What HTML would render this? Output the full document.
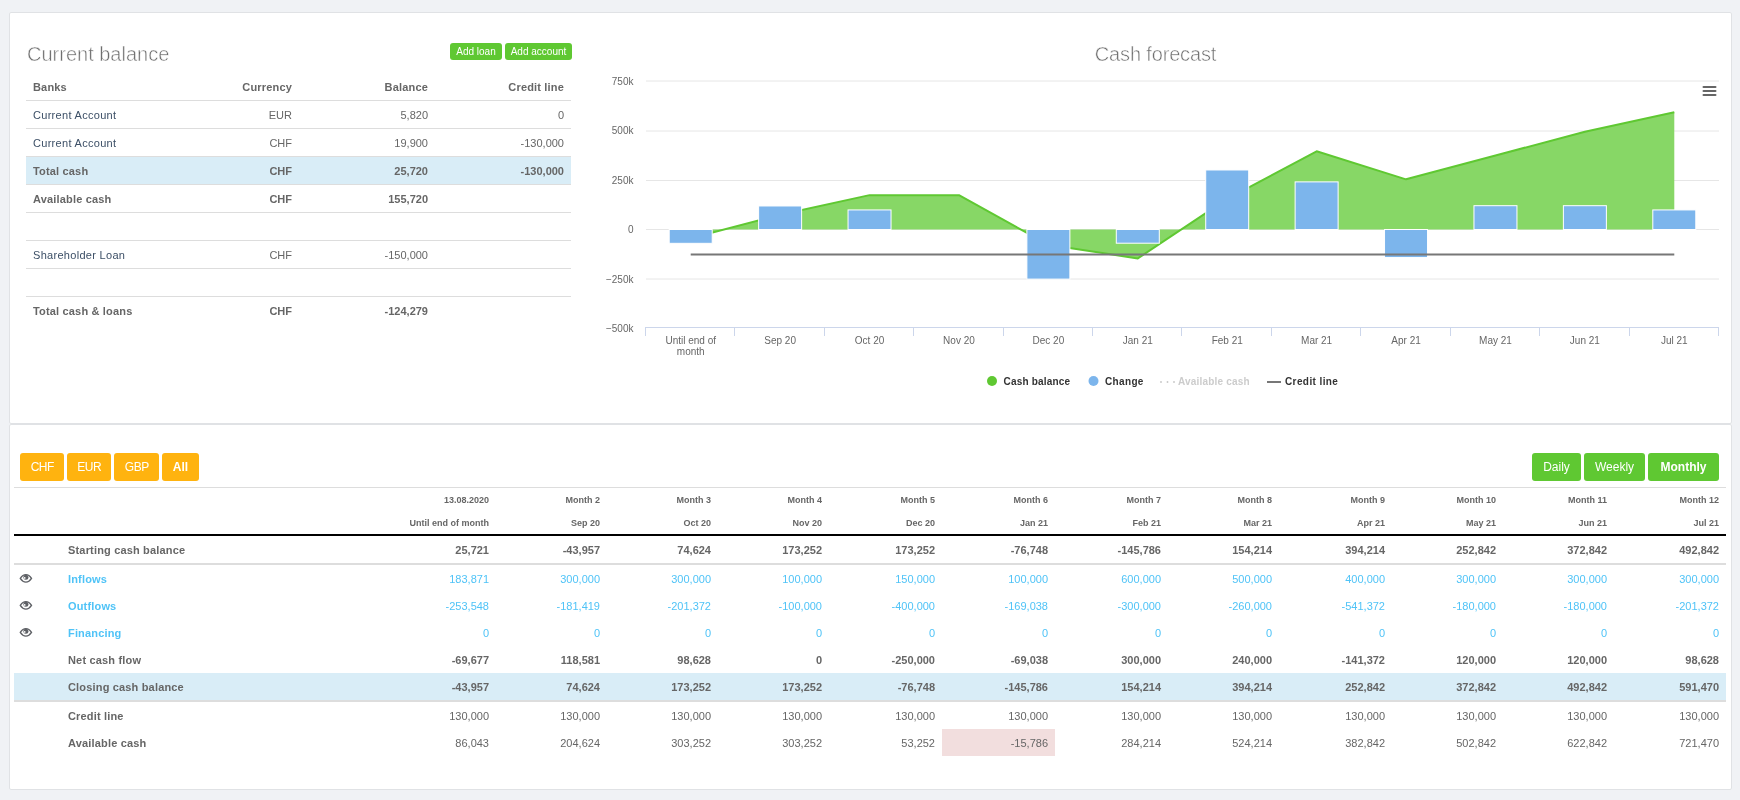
<!DOCTYPE html>
<html><head><meta charset="utf-8"><style>
html,body{margin:0;padding:0;}
body{width:1740px;height:800px;background:#f0f2f5;position:relative;overflow:hidden;font-family:"Liberation Sans",sans-serif;}
.t{position:absolute;white-space:nowrap;}
#root{position:absolute;left:0;top:0;width:1740px;height:800px;will-change:transform;}
.r{position:absolute;}
</style></head><body><div id="root">
<div class="r" style="left:9px;top:12px;width:1723px;height:412px;background:#fff;box-sizing:border-box;border:1px solid #e0e2e5;border-radius:2px;"></div>
<div class="r" style="left:9px;top:424px;width:1723px;height:366px;background:#fff;box-sizing:border-box;border:1px solid #e0e2e5;border-radius:2px;"></div>
<div class="t" style="left:27px;top:44.07px;font-size:20px;line-height:20px;color:#6f6f6f;font-weight:300;-webkit-text-stroke:0.5px #fff;">Current balance</div>
<div class="r" style="left:450px;top:43px;width:52px;height:17px;background:#5fc832;border-radius:3px;"></div>
<div class="t" style="left:176.0px;width:600px;text-align:center;top:46.54px;font-size:10px;line-height:10px;color:#fff;font-weight:normal;">Add loan</div>
<div class="r" style="left:505px;top:43px;width:67px;height:17px;background:#5fc832;border-radius:3px;"></div>
<div class="t" style="left:238.5px;width:600px;text-align:center;top:46.54px;font-size:10px;line-height:10px;color:#fff;font-weight:normal;">Add account</div>
<div class="r" style="left:26px;top:100px;width:545px;height:1px;background:#dddddd;"></div>
<div class="r" style="left:26px;top:128px;width:545px;height:1px;background:#dddddd;"></div>
<div class="r" style="left:26px;top:156px;width:545px;height:1px;background:#dddddd;"></div>
<div class="r" style="left:26px;top:184px;width:545px;height:1px;background:#dddddd;"></div>
<div class="r" style="left:26px;top:212px;width:545px;height:1px;background:#dddddd;"></div>
<div class="r" style="left:26px;top:240px;width:545px;height:1px;background:#dddddd;"></div>
<div class="r" style="left:26px;top:268px;width:545px;height:1px;background:#dddddd;"></div>
<div class="r" style="left:26px;top:296px;width:545px;height:1px;background:#dddddd;"></div>
<div class="r" style="left:26px;top:157px;width:545px;height:27px;background:#d9edf7;"></div>
<div class="t" style="left:33px;top:81.69px;font-size:11px;line-height:11px;color:#666;font-weight:bold;letter-spacing:0.17px">Banks</div>
<div class="t" style="left:-108px;width:400px;text-align:right;top:81.69px;font-size:11px;line-height:11px;color:#666;font-weight:bold;letter-spacing:0.17px">Currency</div>
<div class="t" style="left:28px;width:400px;text-align:right;top:81.69px;font-size:11px;line-height:11px;color:#666;font-weight:bold;letter-spacing:0.17px">Balance</div>
<div class="t" style="left:164px;width:400px;text-align:right;top:81.69px;font-size:11px;line-height:11px;color:#666;font-weight:bold;letter-spacing:0.17px">Credit line</div>
<div class="t" style="left:33px;top:109.69px;font-size:11px;line-height:11px;color:#3c4f66;font-weight:normal;letter-spacing:0.3px">Current Account</div>
<div class="t" style="left:-108px;width:400px;text-align:right;top:109.69px;font-size:11px;line-height:11px;color:#666;font-weight:normal;">EUR</div>
<div class="t" style="left:28px;width:400px;text-align:right;top:109.69px;font-size:11px;line-height:11px;color:#666;font-weight:normal;">5,820</div>
<div class="t" style="left:164px;width:400px;text-align:right;top:109.69px;font-size:11px;line-height:11px;color:#666;font-weight:normal;">0</div>
<div class="t" style="left:33px;top:137.69px;font-size:11px;line-height:11px;color:#3c4f66;font-weight:normal;letter-spacing:0.3px">Current Account</div>
<div class="t" style="left:-108px;width:400px;text-align:right;top:137.69px;font-size:11px;line-height:11px;color:#666;font-weight:normal;">CHF</div>
<div class="t" style="left:28px;width:400px;text-align:right;top:137.69px;font-size:11px;line-height:11px;color:#666;font-weight:normal;">19,900</div>
<div class="t" style="left:164px;width:400px;text-align:right;top:137.69px;font-size:11px;line-height:11px;color:#666;font-weight:normal;">-130,000</div>
<div class="t" style="left:33px;top:165.69px;font-size:11px;line-height:11px;color:#666;font-weight:bold;letter-spacing:0.17px">Total cash</div>
<div class="t" style="left:-108px;width:400px;text-align:right;top:165.69px;font-size:11px;line-height:11px;color:#666;font-weight:bold;">CHF</div>
<div class="t" style="left:28px;width:400px;text-align:right;top:165.69px;font-size:11px;line-height:11px;color:#666;font-weight:bold;">25,720</div>
<div class="t" style="left:164px;width:400px;text-align:right;top:165.69px;font-size:11px;line-height:11px;color:#666;font-weight:bold;">-130,000</div>
<div class="t" style="left:33px;top:193.69px;font-size:11px;line-height:11px;color:#666;font-weight:bold;letter-spacing:0.17px">Available cash</div>
<div class="t" style="left:-108px;width:400px;text-align:right;top:193.69px;font-size:11px;line-height:11px;color:#666;font-weight:bold;">CHF</div>
<div class="t" style="left:28px;width:400px;text-align:right;top:193.69px;font-size:11px;line-height:11px;color:#666;font-weight:bold;">155,720</div>
<div class="t" style="left:33px;top:249.69px;font-size:11px;line-height:11px;color:#3c4f66;font-weight:normal;letter-spacing:0.3px">Shareholder Loan</div>
<div class="t" style="left:-108px;width:400px;text-align:right;top:249.69px;font-size:11px;line-height:11px;color:#666;font-weight:normal;">CHF</div>
<div class="t" style="left:28px;width:400px;text-align:right;top:249.69px;font-size:11px;line-height:11px;color:#666;font-weight:normal;">-150,000</div>
<div class="t" style="left:33px;top:305.69px;font-size:11px;line-height:11px;color:#666;font-weight:bold;letter-spacing:0.17px">Total cash &amp; loans</div>
<div class="t" style="left:-108px;width:400px;text-align:right;top:305.69px;font-size:11px;line-height:11px;color:#666;font-weight:bold;">CHF</div>
<div class="t" style="left:28px;width:400px;text-align:right;top:305.69px;font-size:11px;line-height:11px;color:#666;font-weight:bold;">-124,279</div>
<div class="t" style="left:855.5px;width:600px;text-align:center;top:44.07px;font-size:20px;line-height:20px;color:#6f6f6f;font-weight:300;-webkit-text-stroke:0.5px #fff;letter-spacing:-0.15px;">Cash forecast</div>
<div class="t" style="left:233.5px;width:400px;text-align:right;top:77.34px;font-size:10px;line-height:10px;color:#666;font-weight:normal;">750k</div>
<div class="t" style="left:233.5px;width:400px;text-align:right;top:125.94px;font-size:10px;line-height:10px;color:#666;font-weight:normal;">500k</div>
<div class="t" style="left:233.5px;width:400px;text-align:right;top:175.54px;font-size:10px;line-height:10px;color:#666;font-weight:normal;">250k</div>
<div class="t" style="left:233.5px;width:400px;text-align:right;top:225.14px;font-size:10px;line-height:10px;color:#666;font-weight:normal;">0</div>
<div class="t" style="left:233.5px;width:400px;text-align:right;top:274.74px;font-size:10px;line-height:10px;color:#666;font-weight:normal;">−250k</div>
<div class="t" style="left:233.5px;width:400px;text-align:right;top:324.34px;font-size:10px;line-height:10px;color:#666;font-weight:normal;">−500k</div>
<div class="t" style="left:390.70833333333337px;width:600px;text-align:center;top:335.54px;font-size:10px;line-height:10px;color:#666;font-weight:normal;">Until end of</div>
<div class="t" style="left:390.70833333333337px;width:600px;text-align:center;top:346.54px;font-size:10px;line-height:10px;color:#666;font-weight:normal;">month</div>
<div class="t" style="left:480.125px;width:600px;text-align:center;top:335.54px;font-size:10px;line-height:10px;color:#666;font-weight:normal;">Sep 20</div>
<div class="t" style="left:569.5416666666667px;width:600px;text-align:center;top:335.54px;font-size:10px;line-height:10px;color:#666;font-weight:normal;">Oct 20</div>
<div class="t" style="left:658.9583333333334px;width:600px;text-align:center;top:335.54px;font-size:10px;line-height:10px;color:#666;font-weight:normal;">Nov 20</div>
<div class="t" style="left:748.375px;width:600px;text-align:center;top:335.54px;font-size:10px;line-height:10px;color:#666;font-weight:normal;">Dec 20</div>
<div class="t" style="left:837.7916666666667px;width:600px;text-align:center;top:335.54px;font-size:10px;line-height:10px;color:#666;font-weight:normal;">Jan 21</div>
<div class="t" style="left:927.2083333333335px;width:600px;text-align:center;top:335.54px;font-size:10px;line-height:10px;color:#666;font-weight:normal;">Feb 21</div>
<div class="t" style="left:1016.625px;width:600px;text-align:center;top:335.54px;font-size:10px;line-height:10px;color:#666;font-weight:normal;">Mar 21</div>
<div class="t" style="left:1106.0416666666667px;width:600px;text-align:center;top:335.54px;font-size:10px;line-height:10px;color:#666;font-weight:normal;">Apr 21</div>
<div class="t" style="left:1195.4583333333335px;width:600px;text-align:center;top:335.54px;font-size:10px;line-height:10px;color:#666;font-weight:normal;">May 21</div>
<div class="t" style="left:1284.875px;width:600px;text-align:center;top:335.54px;font-size:10px;line-height:10px;color:#666;font-weight:normal;">Jun 21</div>
<div class="t" style="left:1374.2916666666667px;width:600px;text-align:center;top:335.54px;font-size:10px;line-height:10px;color:#666;font-weight:normal;">Jul 21</div>
<svg class="r" style="left:0;top:0" width="1740" height="800"><line x1="646" y1="81.0" x2="1719" y2="81.0" stroke="#e6e6e6" stroke-width="1"/><line x1="646" y1="131.0" x2="1719" y2="131.0" stroke="#e6e6e6" stroke-width="1"/><line x1="646" y1="180.5" x2="1719" y2="180.5" stroke="#e6e6e6" stroke-width="1"/><line x1="646" y1="229.5" x2="1719" y2="229.5" stroke="#e6e6e6" stroke-width="1"/><line x1="646" y1="279.0" x2="1719" y2="279.0" stroke="#e6e6e6" stroke-width="1"/><polygon points="690.71,229.5 690.71,238.22 780.12,214.69 869.54,195.13 958.96,195.13 1048.38,244.73 1137.79,258.42 1227.21,198.90 1316.62,151.29 1406.04,179.34 1495.46,155.53 1584.88,131.72 1674.29,112.15 1674.29,229.5" fill="#87d766"/><polyline points="690.71,238.22 780.12,214.69 869.54,195.13 958.96,195.13 1048.38,244.73 1137.79,258.42 1227.21,198.90 1316.62,151.29 1406.04,179.34 1495.46,155.53 1584.88,131.72 1674.29,112.15" fill="none" stroke="#5fc832" stroke-width="2" stroke-linejoin="round"/><rect x="669.21" y="229.50" width="43" height="13.82" fill="#7cb5ec" stroke="#fff" stroke-width="1"/><rect x="758.62" y="205.97" width="43" height="23.53" fill="#7cb5ec" stroke="#fff" stroke-width="1"/><rect x="848.04" y="209.93" width="43" height="19.57" fill="#7cb5ec" stroke="#fff" stroke-width="1"/><rect x="1026.88" y="229.50" width="43" height="49.60" fill="#7cb5ec" stroke="#fff" stroke-width="1"/><rect x="1116.29" y="229.50" width="43" height="13.70" fill="#7cb5ec" stroke="#fff" stroke-width="1"/><rect x="1205.71" y="169.98" width="43" height="59.52" fill="#7cb5ec" stroke="#fff" stroke-width="1"/><rect x="1295.12" y="181.88" width="43" height="47.62" fill="#7cb5ec" stroke="#fff" stroke-width="1"/><rect x="1384.54" y="229.50" width="43" height="28.05" fill="#7cb5ec" stroke="#fff" stroke-width="1"/><rect x="1473.96" y="205.69" width="43" height="23.81" fill="#7cb5ec" stroke="#fff" stroke-width="1"/><rect x="1563.38" y="205.69" width="43" height="23.81" fill="#7cb5ec" stroke="#fff" stroke-width="1"/><rect x="1652.79" y="209.93" width="43" height="19.57" fill="#7cb5ec" stroke="#fff" stroke-width="1"/><line x1="690.71" y1="254.6" x2="1674.29" y2="254.6" stroke="#777" stroke-width="2"/><rect x="645" y="327" width="1074" height="1" fill="#ccd6eb"/><rect x="645" y="327" width="1" height="9" fill="#ccd6eb"/><rect x="734" y="327" width="1" height="9" fill="#ccd6eb"/><rect x="824" y="327" width="1" height="9" fill="#ccd6eb"/><rect x="913" y="327" width="1" height="9" fill="#ccd6eb"/><rect x="1003" y="327" width="1" height="9" fill="#ccd6eb"/><rect x="1092" y="327" width="1" height="9" fill="#ccd6eb"/><rect x="1181" y="327" width="1" height="9" fill="#ccd6eb"/><rect x="1271" y="327" width="1" height="9" fill="#ccd6eb"/><rect x="1360" y="327" width="1" height="9" fill="#ccd6eb"/><rect x="1450" y="327" width="1" height="9" fill="#ccd6eb"/><rect x="1539" y="327" width="1" height="9" fill="#ccd6eb"/><rect x="1629" y="327" width="1" height="9" fill="#ccd6eb"/><rect x="1718" y="327" width="1" height="9" fill="#ccd6eb"/><line x1="1703.5" y1="87" x2="1715.5" y2="87" stroke="#666" stroke-width="2" stroke-linecap="round"/><line x1="1703.5" y1="91" x2="1715.5" y2="91" stroke="#666" stroke-width="2" stroke-linecap="round"/><line x1="1703.5" y1="95" x2="1715.5" y2="95" stroke="#666" stroke-width="2" stroke-linecap="round"/><circle cx="992" cy="381" r="5" fill="#5fc832"/><circle cx="1093.5" cy="381" r="5" fill="#7cb5ec"/><rect x="1160.25" y="381" width="1.5" height="2" fill="#ccc"/><rect x="1166.75" y="381" width="1.5" height="2" fill="#ccc"/><rect x="1173.25" y="381" width="1.5" height="2" fill="#ccc"/><rect x="1267" y="381" width="14" height="2" fill="#777"/></svg>
<div class="t" style="left:1003.5px;top:376.54px;font-size:10px;line-height:10px;color:#333;font-weight:bold;letter-spacing:0.2px">Cash balance</div>
<div class="t" style="left:1105px;top:376.54px;font-size:10px;line-height:10px;color:#333;font-weight:bold;letter-spacing:0.35px">Change</div>
<div class="t" style="left:1178px;top:376.54px;font-size:10px;line-height:10px;color:#ccc;font-weight:bold;letter-spacing:0.2px">Available cash</div>
<div class="t" style="left:1285px;top:376.54px;font-size:10px;line-height:10px;color:#333;font-weight:bold;letter-spacing:0.4px">Credit line</div>
<div class="r" style="left:20px;top:453px;width:44px;height:28px;background:#ffb30f;border-radius:3px;"></div>
<div class="t" style="left:-257.75px;width:600px;text-align:center;top:461.34px;font-size:12px;line-height:12px;color:#fff;font-weight:normal;letter-spacing:-0.5px">CHF</div>
<div class="r" style="left:67px;top:453px;width:44px;height:28px;background:#ffb30f;border-radius:3px;"></div>
<div class="t" style="left:-210.75px;width:600px;text-align:center;top:461.34px;font-size:12px;line-height:12px;color:#fff;font-weight:normal;letter-spacing:-0.5px">EUR</div>
<div class="r" style="left:114px;top:453px;width:45px;height:28px;background:#ffb30f;border-radius:3px;"></div>
<div class="t" style="left:-163.25px;width:600px;text-align:center;top:461.34px;font-size:12px;line-height:12px;color:#fff;font-weight:normal;letter-spacing:-0.5px">GBP</div>
<div class="r" style="left:162px;top:453px;width:37px;height:28px;background:#ffb30f;border-radius:3px;"></div>
<div class="t" style="left:-119.5px;width:600px;text-align:center;top:460.84px;font-size:12px;line-height:12px;color:#fff;font-weight:bold;">All</div>
<div class="r" style="left:1532px;top:453px;width:49px;height:28px;background:#5fc832;border-radius:3px;"></div>
<div class="t" style="left:1256.5px;width:600px;text-align:center;top:460.84px;font-size:12px;line-height:12px;color:#fff;font-weight:normal;">Daily</div>
<div class="r" style="left:1584px;top:453px;width:61px;height:28px;background:#5fc832;border-radius:3px;"></div>
<div class="t" style="left:1314.5px;width:600px;text-align:center;top:460.84px;font-size:12px;line-height:12px;color:#fff;font-weight:normal;">Weekly</div>
<div class="r" style="left:1648px;top:453px;width:71px;height:28px;background:#5fc832;border-radius:3px;"></div>
<div class="t" style="left:1383.5px;width:600px;text-align:center;top:460.84px;font-size:12px;line-height:12px;color:#fff;font-weight:bold;">Monthly</div>
<div class="r" style="left:14px;top:487px;width:1712px;height:1px;background:#dddddd;"></div>
<div class="r" style="left:14px;top:534px;width:1712px;height:2px;background:#000;"></div>
<div class="r" style="left:14px;top:563px;width:1712px;height:2px;background:#dddddd;"></div>
<div class="r" style="left:14px;top:673px;width:1712px;height:27px;background:#d9edf7;"></div>
<div class="r" style="left:14px;top:700px;width:1712px;height:2px;background:#dddddd;"></div>
<div class="r" style="left:942px;top:729px;width:113px;height:27px;background:#f2dede;"></div>
<div class="t" style="left:89px;width:400px;text-align:right;top:496.38px;font-size:9px;line-height:9px;color:#666;font-weight:bold;">13.08.2020</div>
<div class="t" style="left:89px;width:400px;text-align:right;top:519.38px;font-size:9px;line-height:9px;color:#666;font-weight:bold;">Until end of month</div>
<div class="t" style="left:200px;width:400px;text-align:right;top:496.38px;font-size:9px;line-height:9px;color:#666;font-weight:bold;">Month 2</div>
<div class="t" style="left:200px;width:400px;text-align:right;top:519.38px;font-size:9px;line-height:9px;color:#666;font-weight:bold;">Sep 20</div>
<div class="t" style="left:311px;width:400px;text-align:right;top:496.38px;font-size:9px;line-height:9px;color:#666;font-weight:bold;">Month 3</div>
<div class="t" style="left:311px;width:400px;text-align:right;top:519.38px;font-size:9px;line-height:9px;color:#666;font-weight:bold;">Oct 20</div>
<div class="t" style="left:422px;width:400px;text-align:right;top:496.38px;font-size:9px;line-height:9px;color:#666;font-weight:bold;">Month 4</div>
<div class="t" style="left:422px;width:400px;text-align:right;top:519.38px;font-size:9px;line-height:9px;color:#666;font-weight:bold;">Nov 20</div>
<div class="t" style="left:535px;width:400px;text-align:right;top:496.38px;font-size:9px;line-height:9px;color:#666;font-weight:bold;">Month 5</div>
<div class="t" style="left:535px;width:400px;text-align:right;top:519.38px;font-size:9px;line-height:9px;color:#666;font-weight:bold;">Dec 20</div>
<div class="t" style="left:648px;width:400px;text-align:right;top:496.38px;font-size:9px;line-height:9px;color:#666;font-weight:bold;">Month 6</div>
<div class="t" style="left:648px;width:400px;text-align:right;top:519.38px;font-size:9px;line-height:9px;color:#666;font-weight:bold;">Jan 21</div>
<div class="t" style="left:761px;width:400px;text-align:right;top:496.38px;font-size:9px;line-height:9px;color:#666;font-weight:bold;">Month 7</div>
<div class="t" style="left:761px;width:400px;text-align:right;top:519.38px;font-size:9px;line-height:9px;color:#666;font-weight:bold;">Feb 21</div>
<div class="t" style="left:872px;width:400px;text-align:right;top:496.38px;font-size:9px;line-height:9px;color:#666;font-weight:bold;">Month 8</div>
<div class="t" style="left:872px;width:400px;text-align:right;top:519.38px;font-size:9px;line-height:9px;color:#666;font-weight:bold;">Mar 21</div>
<div class="t" style="left:985px;width:400px;text-align:right;top:496.38px;font-size:9px;line-height:9px;color:#666;font-weight:bold;">Month 9</div>
<div class="t" style="left:985px;width:400px;text-align:right;top:519.38px;font-size:9px;line-height:9px;color:#666;font-weight:bold;">Apr 21</div>
<div class="t" style="left:1096px;width:400px;text-align:right;top:496.38px;font-size:9px;line-height:9px;color:#666;font-weight:bold;">Month 10</div>
<div class="t" style="left:1096px;width:400px;text-align:right;top:519.38px;font-size:9px;line-height:9px;color:#666;font-weight:bold;">May 21</div>
<div class="t" style="left:1207px;width:400px;text-align:right;top:496.38px;font-size:9px;line-height:9px;color:#666;font-weight:bold;">Month 11</div>
<div class="t" style="left:1207px;width:400px;text-align:right;top:519.38px;font-size:9px;line-height:9px;color:#666;font-weight:bold;">Jun 21</div>
<div class="t" style="left:1319px;width:400px;text-align:right;top:496.38px;font-size:9px;line-height:9px;color:#666;font-weight:bold;">Month 12</div>
<div class="t" style="left:1319px;width:400px;text-align:right;top:519.38px;font-size:9px;line-height:9px;color:#666;font-weight:bold;">Jul 21</div>
<div class="t" style="left:68px;top:544.69px;font-size:11px;line-height:11px;color:#666;font-weight:bold;letter-spacing:0.17px">Starting cash balance</div>
<div class="t" style="left:89px;width:400px;text-align:right;top:544.69px;font-size:11px;line-height:11px;color:#666;font-weight:bold;">25,721</div>
<div class="t" style="left:200px;width:400px;text-align:right;top:544.69px;font-size:11px;line-height:11px;color:#666;font-weight:bold;">-43,957</div>
<div class="t" style="left:311px;width:400px;text-align:right;top:544.69px;font-size:11px;line-height:11px;color:#666;font-weight:bold;">74,624</div>
<div class="t" style="left:422px;width:400px;text-align:right;top:544.69px;font-size:11px;line-height:11px;color:#666;font-weight:bold;">173,252</div>
<div class="t" style="left:535px;width:400px;text-align:right;top:544.69px;font-size:11px;line-height:11px;color:#666;font-weight:bold;">173,252</div>
<div class="t" style="left:648px;width:400px;text-align:right;top:544.69px;font-size:11px;line-height:11px;color:#666;font-weight:bold;">-76,748</div>
<div class="t" style="left:761px;width:400px;text-align:right;top:544.69px;font-size:11px;line-height:11px;color:#666;font-weight:bold;">-145,786</div>
<div class="t" style="left:872px;width:400px;text-align:right;top:544.69px;font-size:11px;line-height:11px;color:#666;font-weight:bold;">154,214</div>
<div class="t" style="left:985px;width:400px;text-align:right;top:544.69px;font-size:11px;line-height:11px;color:#666;font-weight:bold;">394,214</div>
<div class="t" style="left:1096px;width:400px;text-align:right;top:544.69px;font-size:11px;line-height:11px;color:#666;font-weight:bold;">252,842</div>
<div class="t" style="left:1207px;width:400px;text-align:right;top:544.69px;font-size:11px;line-height:11px;color:#666;font-weight:bold;">372,842</div>
<div class="t" style="left:1319px;width:400px;text-align:right;top:544.69px;font-size:11px;line-height:11px;color:#666;font-weight:bold;">492,842</div>
<div class="t" style="left:68px;top:573.69px;font-size:11px;line-height:11px;color:#4fc3f7;font-weight:bold;letter-spacing:0.17px">Inflows</div>
<svg class="r" style="left:19px;top:573px" width="14" height="11" viewBox="0 0 14 11"><path d="M1.3 5.4 C3.2 2.4 5 1.6 6.9 1.6 C8.8 1.6 10.6 2.4 12.5 5.4 C10.6 8.4 8.8 9.1 6.9 9.1 C5 9.1 3.2 8.4 1.3 5.4 Z" fill="none" stroke="#5f6166" stroke-width="1.4"/><circle cx="6.9" cy="4.3" r="2.5" fill="#5f6166"/><circle cx="5.7" cy="4.9" r="0.85" fill="#fff"/></svg>
<div class="t" style="left:89px;width:400px;text-align:right;top:573.69px;font-size:11px;line-height:11px;color:#4fc3f7;font-weight:normal;">183,871</div>
<div class="t" style="left:200px;width:400px;text-align:right;top:573.69px;font-size:11px;line-height:11px;color:#4fc3f7;font-weight:normal;">300,000</div>
<div class="t" style="left:311px;width:400px;text-align:right;top:573.69px;font-size:11px;line-height:11px;color:#4fc3f7;font-weight:normal;">300,000</div>
<div class="t" style="left:422px;width:400px;text-align:right;top:573.69px;font-size:11px;line-height:11px;color:#4fc3f7;font-weight:normal;">100,000</div>
<div class="t" style="left:535px;width:400px;text-align:right;top:573.69px;font-size:11px;line-height:11px;color:#4fc3f7;font-weight:normal;">150,000</div>
<div class="t" style="left:648px;width:400px;text-align:right;top:573.69px;font-size:11px;line-height:11px;color:#4fc3f7;font-weight:normal;">100,000</div>
<div class="t" style="left:761px;width:400px;text-align:right;top:573.69px;font-size:11px;line-height:11px;color:#4fc3f7;font-weight:normal;">600,000</div>
<div class="t" style="left:872px;width:400px;text-align:right;top:573.69px;font-size:11px;line-height:11px;color:#4fc3f7;font-weight:normal;">500,000</div>
<div class="t" style="left:985px;width:400px;text-align:right;top:573.69px;font-size:11px;line-height:11px;color:#4fc3f7;font-weight:normal;">400,000</div>
<div class="t" style="left:1096px;width:400px;text-align:right;top:573.69px;font-size:11px;line-height:11px;color:#4fc3f7;font-weight:normal;">300,000</div>
<div class="t" style="left:1207px;width:400px;text-align:right;top:573.69px;font-size:11px;line-height:11px;color:#4fc3f7;font-weight:normal;">300,000</div>
<div class="t" style="left:1319px;width:400px;text-align:right;top:573.69px;font-size:11px;line-height:11px;color:#4fc3f7;font-weight:normal;">300,000</div>
<div class="t" style="left:68px;top:600.69px;font-size:11px;line-height:11px;color:#4fc3f7;font-weight:bold;letter-spacing:0.17px">Outflows</div>
<svg class="r" style="left:19px;top:600px" width="14" height="11" viewBox="0 0 14 11"><path d="M1.3 5.4 C3.2 2.4 5 1.6 6.9 1.6 C8.8 1.6 10.6 2.4 12.5 5.4 C10.6 8.4 8.8 9.1 6.9 9.1 C5 9.1 3.2 8.4 1.3 5.4 Z" fill="none" stroke="#5f6166" stroke-width="1.4"/><circle cx="6.9" cy="4.3" r="2.5" fill="#5f6166"/><circle cx="5.7" cy="4.9" r="0.85" fill="#fff"/></svg>
<div class="t" style="left:89px;width:400px;text-align:right;top:600.69px;font-size:11px;line-height:11px;color:#4fc3f7;font-weight:normal;">-253,548</div>
<div class="t" style="left:200px;width:400px;text-align:right;top:600.69px;font-size:11px;line-height:11px;color:#4fc3f7;font-weight:normal;">-181,419</div>
<div class="t" style="left:311px;width:400px;text-align:right;top:600.69px;font-size:11px;line-height:11px;color:#4fc3f7;font-weight:normal;">-201,372</div>
<div class="t" style="left:422px;width:400px;text-align:right;top:600.69px;font-size:11px;line-height:11px;color:#4fc3f7;font-weight:normal;">-100,000</div>
<div class="t" style="left:535px;width:400px;text-align:right;top:600.69px;font-size:11px;line-height:11px;color:#4fc3f7;font-weight:normal;">-400,000</div>
<div class="t" style="left:648px;width:400px;text-align:right;top:600.69px;font-size:11px;line-height:11px;color:#4fc3f7;font-weight:normal;">-169,038</div>
<div class="t" style="left:761px;width:400px;text-align:right;top:600.69px;font-size:11px;line-height:11px;color:#4fc3f7;font-weight:normal;">-300,000</div>
<div class="t" style="left:872px;width:400px;text-align:right;top:600.69px;font-size:11px;line-height:11px;color:#4fc3f7;font-weight:normal;">-260,000</div>
<div class="t" style="left:985px;width:400px;text-align:right;top:600.69px;font-size:11px;line-height:11px;color:#4fc3f7;font-weight:normal;">-541,372</div>
<div class="t" style="left:1096px;width:400px;text-align:right;top:600.69px;font-size:11px;line-height:11px;color:#4fc3f7;font-weight:normal;">-180,000</div>
<div class="t" style="left:1207px;width:400px;text-align:right;top:600.69px;font-size:11px;line-height:11px;color:#4fc3f7;font-weight:normal;">-180,000</div>
<div class="t" style="left:1319px;width:400px;text-align:right;top:600.69px;font-size:11px;line-height:11px;color:#4fc3f7;font-weight:normal;">-201,372</div>
<div class="t" style="left:68px;top:627.69px;font-size:11px;line-height:11px;color:#4fc3f7;font-weight:bold;letter-spacing:0.17px">Financing</div>
<svg class="r" style="left:19px;top:627px" width="14" height="11" viewBox="0 0 14 11"><path d="M1.3 5.4 C3.2 2.4 5 1.6 6.9 1.6 C8.8 1.6 10.6 2.4 12.5 5.4 C10.6 8.4 8.8 9.1 6.9 9.1 C5 9.1 3.2 8.4 1.3 5.4 Z" fill="none" stroke="#5f6166" stroke-width="1.4"/><circle cx="6.9" cy="4.3" r="2.5" fill="#5f6166"/><circle cx="5.7" cy="4.9" r="0.85" fill="#fff"/></svg>
<div class="t" style="left:89px;width:400px;text-align:right;top:627.69px;font-size:11px;line-height:11px;color:#4fc3f7;font-weight:normal;">0</div>
<div class="t" style="left:200px;width:400px;text-align:right;top:627.69px;font-size:11px;line-height:11px;color:#4fc3f7;font-weight:normal;">0</div>
<div class="t" style="left:311px;width:400px;text-align:right;top:627.69px;font-size:11px;line-height:11px;color:#4fc3f7;font-weight:normal;">0</div>
<div class="t" style="left:422px;width:400px;text-align:right;top:627.69px;font-size:11px;line-height:11px;color:#4fc3f7;font-weight:normal;">0</div>
<div class="t" style="left:535px;width:400px;text-align:right;top:627.69px;font-size:11px;line-height:11px;color:#4fc3f7;font-weight:normal;">0</div>
<div class="t" style="left:648px;width:400px;text-align:right;top:627.69px;font-size:11px;line-height:11px;color:#4fc3f7;font-weight:normal;">0</div>
<div class="t" style="left:761px;width:400px;text-align:right;top:627.69px;font-size:11px;line-height:11px;color:#4fc3f7;font-weight:normal;">0</div>
<div class="t" style="left:872px;width:400px;text-align:right;top:627.69px;font-size:11px;line-height:11px;color:#4fc3f7;font-weight:normal;">0</div>
<div class="t" style="left:985px;width:400px;text-align:right;top:627.69px;font-size:11px;line-height:11px;color:#4fc3f7;font-weight:normal;">0</div>
<div class="t" style="left:1096px;width:400px;text-align:right;top:627.69px;font-size:11px;line-height:11px;color:#4fc3f7;font-weight:normal;">0</div>
<div class="t" style="left:1207px;width:400px;text-align:right;top:627.69px;font-size:11px;line-height:11px;color:#4fc3f7;font-weight:normal;">0</div>
<div class="t" style="left:1319px;width:400px;text-align:right;top:627.69px;font-size:11px;line-height:11px;color:#4fc3f7;font-weight:normal;">0</div>
<div class="t" style="left:68px;top:654.69px;font-size:11px;line-height:11px;color:#666;font-weight:bold;letter-spacing:0.17px">Net cash flow</div>
<div class="t" style="left:89px;width:400px;text-align:right;top:654.69px;font-size:11px;line-height:11px;color:#666;font-weight:bold;">-69,677</div>
<div class="t" style="left:200px;width:400px;text-align:right;top:654.69px;font-size:11px;line-height:11px;color:#666;font-weight:bold;">118,581</div>
<div class="t" style="left:311px;width:400px;text-align:right;top:654.69px;font-size:11px;line-height:11px;color:#666;font-weight:bold;">98,628</div>
<div class="t" style="left:422px;width:400px;text-align:right;top:654.69px;font-size:11px;line-height:11px;color:#666;font-weight:bold;">0</div>
<div class="t" style="left:535px;width:400px;text-align:right;top:654.69px;font-size:11px;line-height:11px;color:#666;font-weight:bold;">-250,000</div>
<div class="t" style="left:648px;width:400px;text-align:right;top:654.69px;font-size:11px;line-height:11px;color:#666;font-weight:bold;">-69,038</div>
<div class="t" style="left:761px;width:400px;text-align:right;top:654.69px;font-size:11px;line-height:11px;color:#666;font-weight:bold;">300,000</div>
<div class="t" style="left:872px;width:400px;text-align:right;top:654.69px;font-size:11px;line-height:11px;color:#666;font-weight:bold;">240,000</div>
<div class="t" style="left:985px;width:400px;text-align:right;top:654.69px;font-size:11px;line-height:11px;color:#666;font-weight:bold;">-141,372</div>
<div class="t" style="left:1096px;width:400px;text-align:right;top:654.69px;font-size:11px;line-height:11px;color:#666;font-weight:bold;">120,000</div>
<div class="t" style="left:1207px;width:400px;text-align:right;top:654.69px;font-size:11px;line-height:11px;color:#666;font-weight:bold;">120,000</div>
<div class="t" style="left:1319px;width:400px;text-align:right;top:654.69px;font-size:11px;line-height:11px;color:#666;font-weight:bold;">98,628</div>
<div class="t" style="left:68px;top:681.69px;font-size:11px;line-height:11px;color:#666;font-weight:bold;letter-spacing:0.17px">Closing cash balance</div>
<div class="t" style="left:89px;width:400px;text-align:right;top:681.69px;font-size:11px;line-height:11px;color:#666;font-weight:bold;">-43,957</div>
<div class="t" style="left:200px;width:400px;text-align:right;top:681.69px;font-size:11px;line-height:11px;color:#666;font-weight:bold;">74,624</div>
<div class="t" style="left:311px;width:400px;text-align:right;top:681.69px;font-size:11px;line-height:11px;color:#666;font-weight:bold;">173,252</div>
<div class="t" style="left:422px;width:400px;text-align:right;top:681.69px;font-size:11px;line-height:11px;color:#666;font-weight:bold;">173,252</div>
<div class="t" style="left:535px;width:400px;text-align:right;top:681.69px;font-size:11px;line-height:11px;color:#666;font-weight:bold;">-76,748</div>
<div class="t" style="left:648px;width:400px;text-align:right;top:681.69px;font-size:11px;line-height:11px;color:#666;font-weight:bold;">-145,786</div>
<div class="t" style="left:761px;width:400px;text-align:right;top:681.69px;font-size:11px;line-height:11px;color:#666;font-weight:bold;">154,214</div>
<div class="t" style="left:872px;width:400px;text-align:right;top:681.69px;font-size:11px;line-height:11px;color:#666;font-weight:bold;">394,214</div>
<div class="t" style="left:985px;width:400px;text-align:right;top:681.69px;font-size:11px;line-height:11px;color:#666;font-weight:bold;">252,842</div>
<div class="t" style="left:1096px;width:400px;text-align:right;top:681.69px;font-size:11px;line-height:11px;color:#666;font-weight:bold;">372,842</div>
<div class="t" style="left:1207px;width:400px;text-align:right;top:681.69px;font-size:11px;line-height:11px;color:#666;font-weight:bold;">492,842</div>
<div class="t" style="left:1319px;width:400px;text-align:right;top:681.69px;font-size:11px;line-height:11px;color:#666;font-weight:bold;">591,470</div>
<div class="t" style="left:68px;top:710.69px;font-size:11px;line-height:11px;color:#666;font-weight:bold;letter-spacing:0.17px">Credit line</div>
<div class="t" style="left:89px;width:400px;text-align:right;top:710.69px;font-size:11px;line-height:11px;color:#666;font-weight:normal;">130,000</div>
<div class="t" style="left:200px;width:400px;text-align:right;top:710.69px;font-size:11px;line-height:11px;color:#666;font-weight:normal;">130,000</div>
<div class="t" style="left:311px;width:400px;text-align:right;top:710.69px;font-size:11px;line-height:11px;color:#666;font-weight:normal;">130,000</div>
<div class="t" style="left:422px;width:400px;text-align:right;top:710.69px;font-size:11px;line-height:11px;color:#666;font-weight:normal;">130,000</div>
<div class="t" style="left:535px;width:400px;text-align:right;top:710.69px;font-size:11px;line-height:11px;color:#666;font-weight:normal;">130,000</div>
<div class="t" style="left:648px;width:400px;text-align:right;top:710.69px;font-size:11px;line-height:11px;color:#666;font-weight:normal;">130,000</div>
<div class="t" style="left:761px;width:400px;text-align:right;top:710.69px;font-size:11px;line-height:11px;color:#666;font-weight:normal;">130,000</div>
<div class="t" style="left:872px;width:400px;text-align:right;top:710.69px;font-size:11px;line-height:11px;color:#666;font-weight:normal;">130,000</div>
<div class="t" style="left:985px;width:400px;text-align:right;top:710.69px;font-size:11px;line-height:11px;color:#666;font-weight:normal;">130,000</div>
<div class="t" style="left:1096px;width:400px;text-align:right;top:710.69px;font-size:11px;line-height:11px;color:#666;font-weight:normal;">130,000</div>
<div class="t" style="left:1207px;width:400px;text-align:right;top:710.69px;font-size:11px;line-height:11px;color:#666;font-weight:normal;">130,000</div>
<div class="t" style="left:1319px;width:400px;text-align:right;top:710.69px;font-size:11px;line-height:11px;color:#666;font-weight:normal;">130,000</div>
<div class="t" style="left:68px;top:737.69px;font-size:11px;line-height:11px;color:#666;font-weight:bold;letter-spacing:0.17px">Available cash</div>
<div class="t" style="left:89px;width:400px;text-align:right;top:737.69px;font-size:11px;line-height:11px;color:#666;font-weight:normal;">86,043</div>
<div class="t" style="left:200px;width:400px;text-align:right;top:737.69px;font-size:11px;line-height:11px;color:#666;font-weight:normal;">204,624</div>
<div class="t" style="left:311px;width:400px;text-align:right;top:737.69px;font-size:11px;line-height:11px;color:#666;font-weight:normal;">303,252</div>
<div class="t" style="left:422px;width:400px;text-align:right;top:737.69px;font-size:11px;line-height:11px;color:#666;font-weight:normal;">303,252</div>
<div class="t" style="left:535px;width:400px;text-align:right;top:737.69px;font-size:11px;line-height:11px;color:#666;font-weight:normal;">53,252</div>
<div class="t" style="left:648px;width:400px;text-align:right;top:737.69px;font-size:11px;line-height:11px;color:#666;font-weight:normal;">-15,786</div>
<div class="t" style="left:761px;width:400px;text-align:right;top:737.69px;font-size:11px;line-height:11px;color:#666;font-weight:normal;">284,214</div>
<div class="t" style="left:872px;width:400px;text-align:right;top:737.69px;font-size:11px;line-height:11px;color:#666;font-weight:normal;">524,214</div>
<div class="t" style="left:985px;width:400px;text-align:right;top:737.69px;font-size:11px;line-height:11px;color:#666;font-weight:normal;">382,842</div>
<div class="t" style="left:1096px;width:400px;text-align:right;top:737.69px;font-size:11px;line-height:11px;color:#666;font-weight:normal;">502,842</div>
<div class="t" style="left:1207px;width:400px;text-align:right;top:737.69px;font-size:11px;line-height:11px;color:#666;font-weight:normal;">622,842</div>
<div class="t" style="left:1319px;width:400px;text-align:right;top:737.69px;font-size:11px;line-height:11px;color:#666;font-weight:normal;">721,470</div>
</div></body></html>
